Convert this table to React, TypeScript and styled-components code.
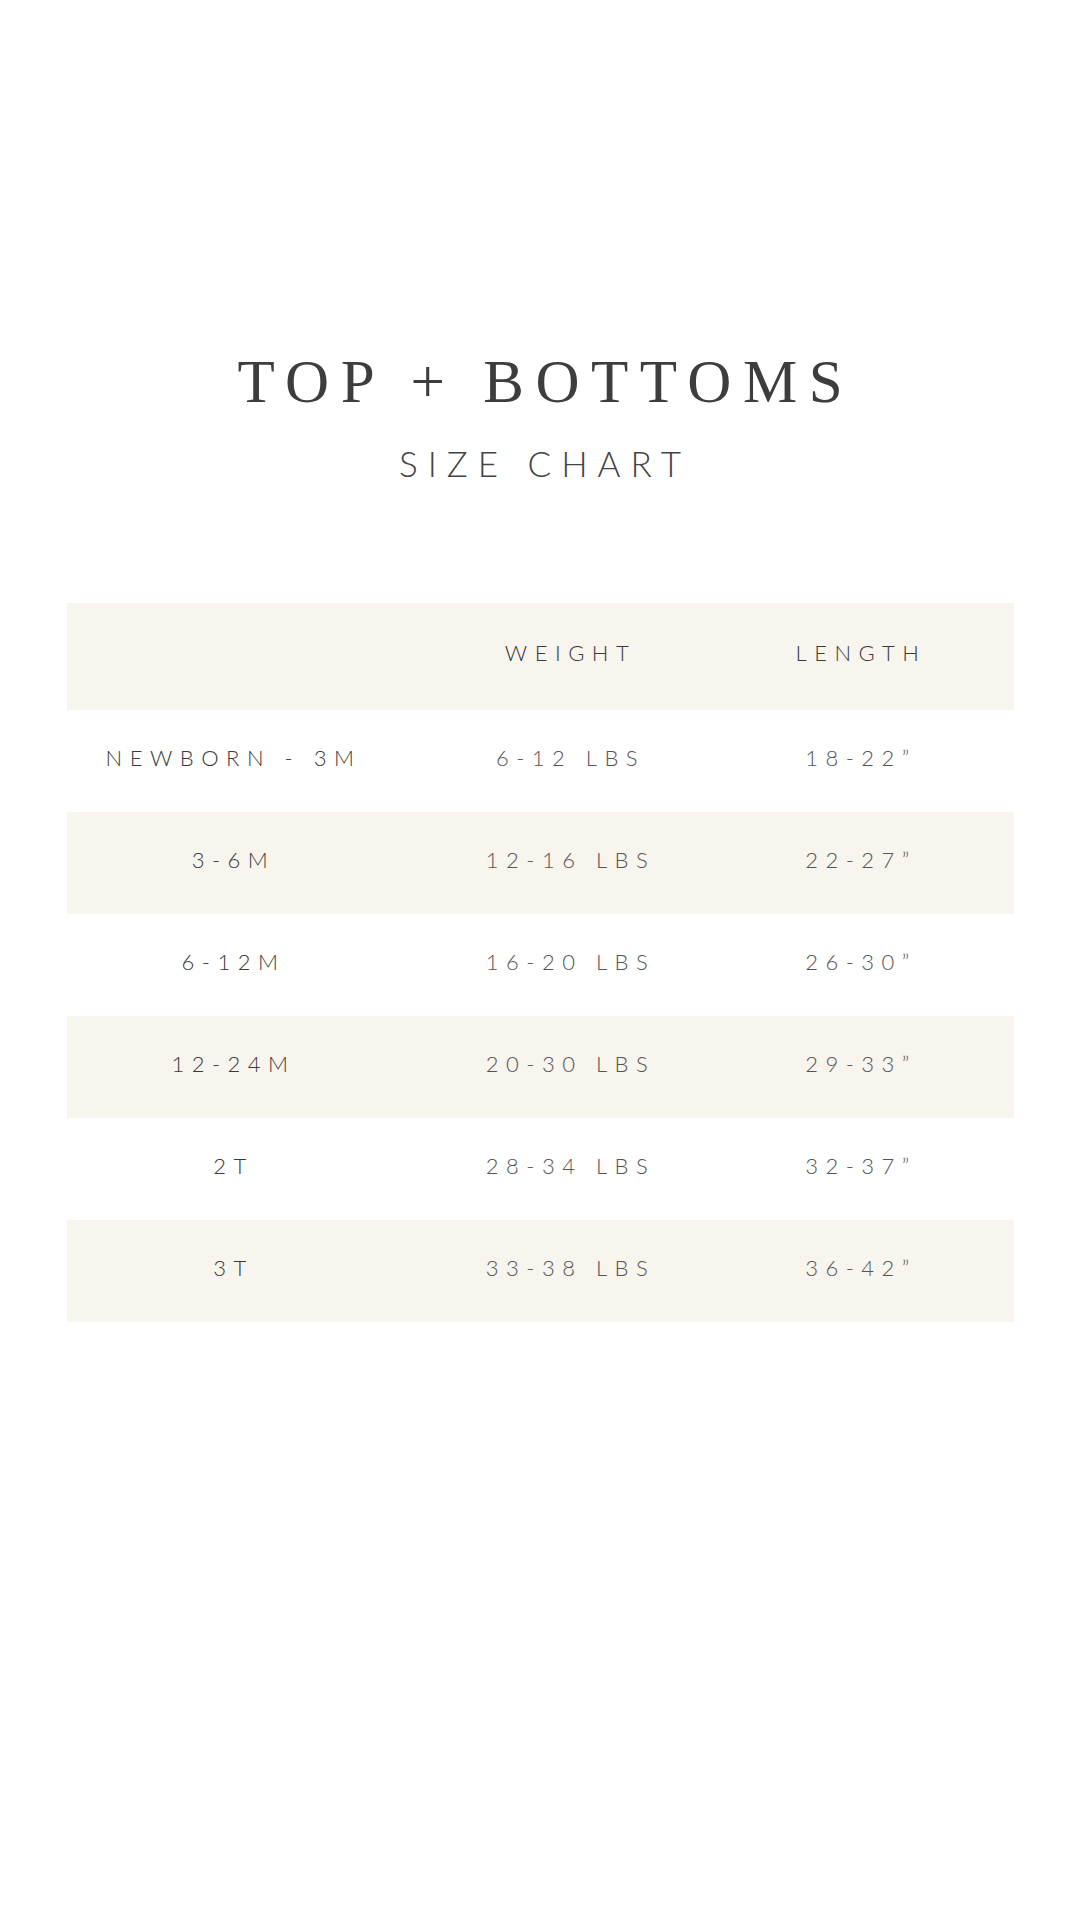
import styled, { createGlobalStyle } from 'styled-components';

const GlobalStyle = createGlobalStyle`
  html, body {
    margin: 0;
    padding: 0;
    background: #ffffff;
  }
`;

const Page = styled.div`
  width: 1080px;
  height: 1920px;
  display: flex;
  flex-direction: column;
  align-items: center;
  padding-top: 350px;
  box-sizing: border-box;
  background: #ffffff;
`;

const Title = styled.h1`
  margin: 0;
  font-family: 'Liberation Serif', 'Times New Roman', serif;
  font-weight: 400;
  font-size: 61px;
  line-height: 64px;
  letter-spacing: 11.5px;
  margin-right: -11.5px;
  color: #3d3d3d;
`;

const Subtitle = styled.h2`
  margin: 29px 0 0;
  font-family: Lato, 'Open Sans', sans-serif;
  font-weight: 300;
  font-size: 35px;
  line-height: 40px;
  letter-spacing: 10px;
  margin-right: -10px;
  color: #444444;
`;

const Table = styled.div`
  width: 947px;
  margin-top: 120px;
  display: flex;
  flex-direction: column;
`;

const Row = styled.div<{ $shaded?: boolean; $height?: number }>`
  display: grid;
  grid-template-columns: 334px 340px 1fr;
  align-items: center;
  height: ${(p) => p.$height ?? 102}px;
  background: ${(p) => (p.$shaded ? '#f8f4ee' : '#ffffff')};
`;

const Cell = styled.div<{ $dark?: boolean; $shift?: number }>`
  text-align: center;
  padding-bottom: 8px;
  font-family: Lato, 'Open Sans', sans-serif;
  font-weight: 300;
  font-size: 22px;
  letter-spacing: 7.5px;
  color: ${(p) => (p.$dark ? '#3a3a3a' : '#555555')};
  transform: translateX(${(p) => p.$shift ?? 0}px);
`;

const rows = [
  ['NEWBORN - 3M', '6-12 LBS', '18-22\u201D'],
  ['3-6M', '12-16 LBS', '22-27\u201D'],
  ['6-12M', '16-20 LBS', '26-30\u201D'],
  ['12-24M', '20-30 LBS', '29-33\u201D'],
  ['2T', '28-34 LBS', '32-37\u201D'],
  ['3T', '33-38 LBS', '36-42\u201D'],
];

export default function App() {
  return (
    <>
      <GlobalStyle />
      <Page>
        <Title>TOP + BOTTOMS</Title>
        <Subtitle>SIZE CHART</Subtitle>
        <Table>
          <Row $shaded $height={107}>
            <Cell />
            <Cell $dark>WEIGHT</Cell>
            <Cell $dark $shift={-16}>LENGTH</Cell>
          </Row>
          {rows.map((r, i) => (
            <Row key={r[0]} $shaded={i % 2 === 1}>
              <Cell $dark>{r[0]}</Cell>
              <Cell>{r[1]}</Cell>
              <Cell $shift={-16}>{r[2]}</Cell>
            </Row>
          ))}
        </Table>
      </Page>
    </>
  );
}
